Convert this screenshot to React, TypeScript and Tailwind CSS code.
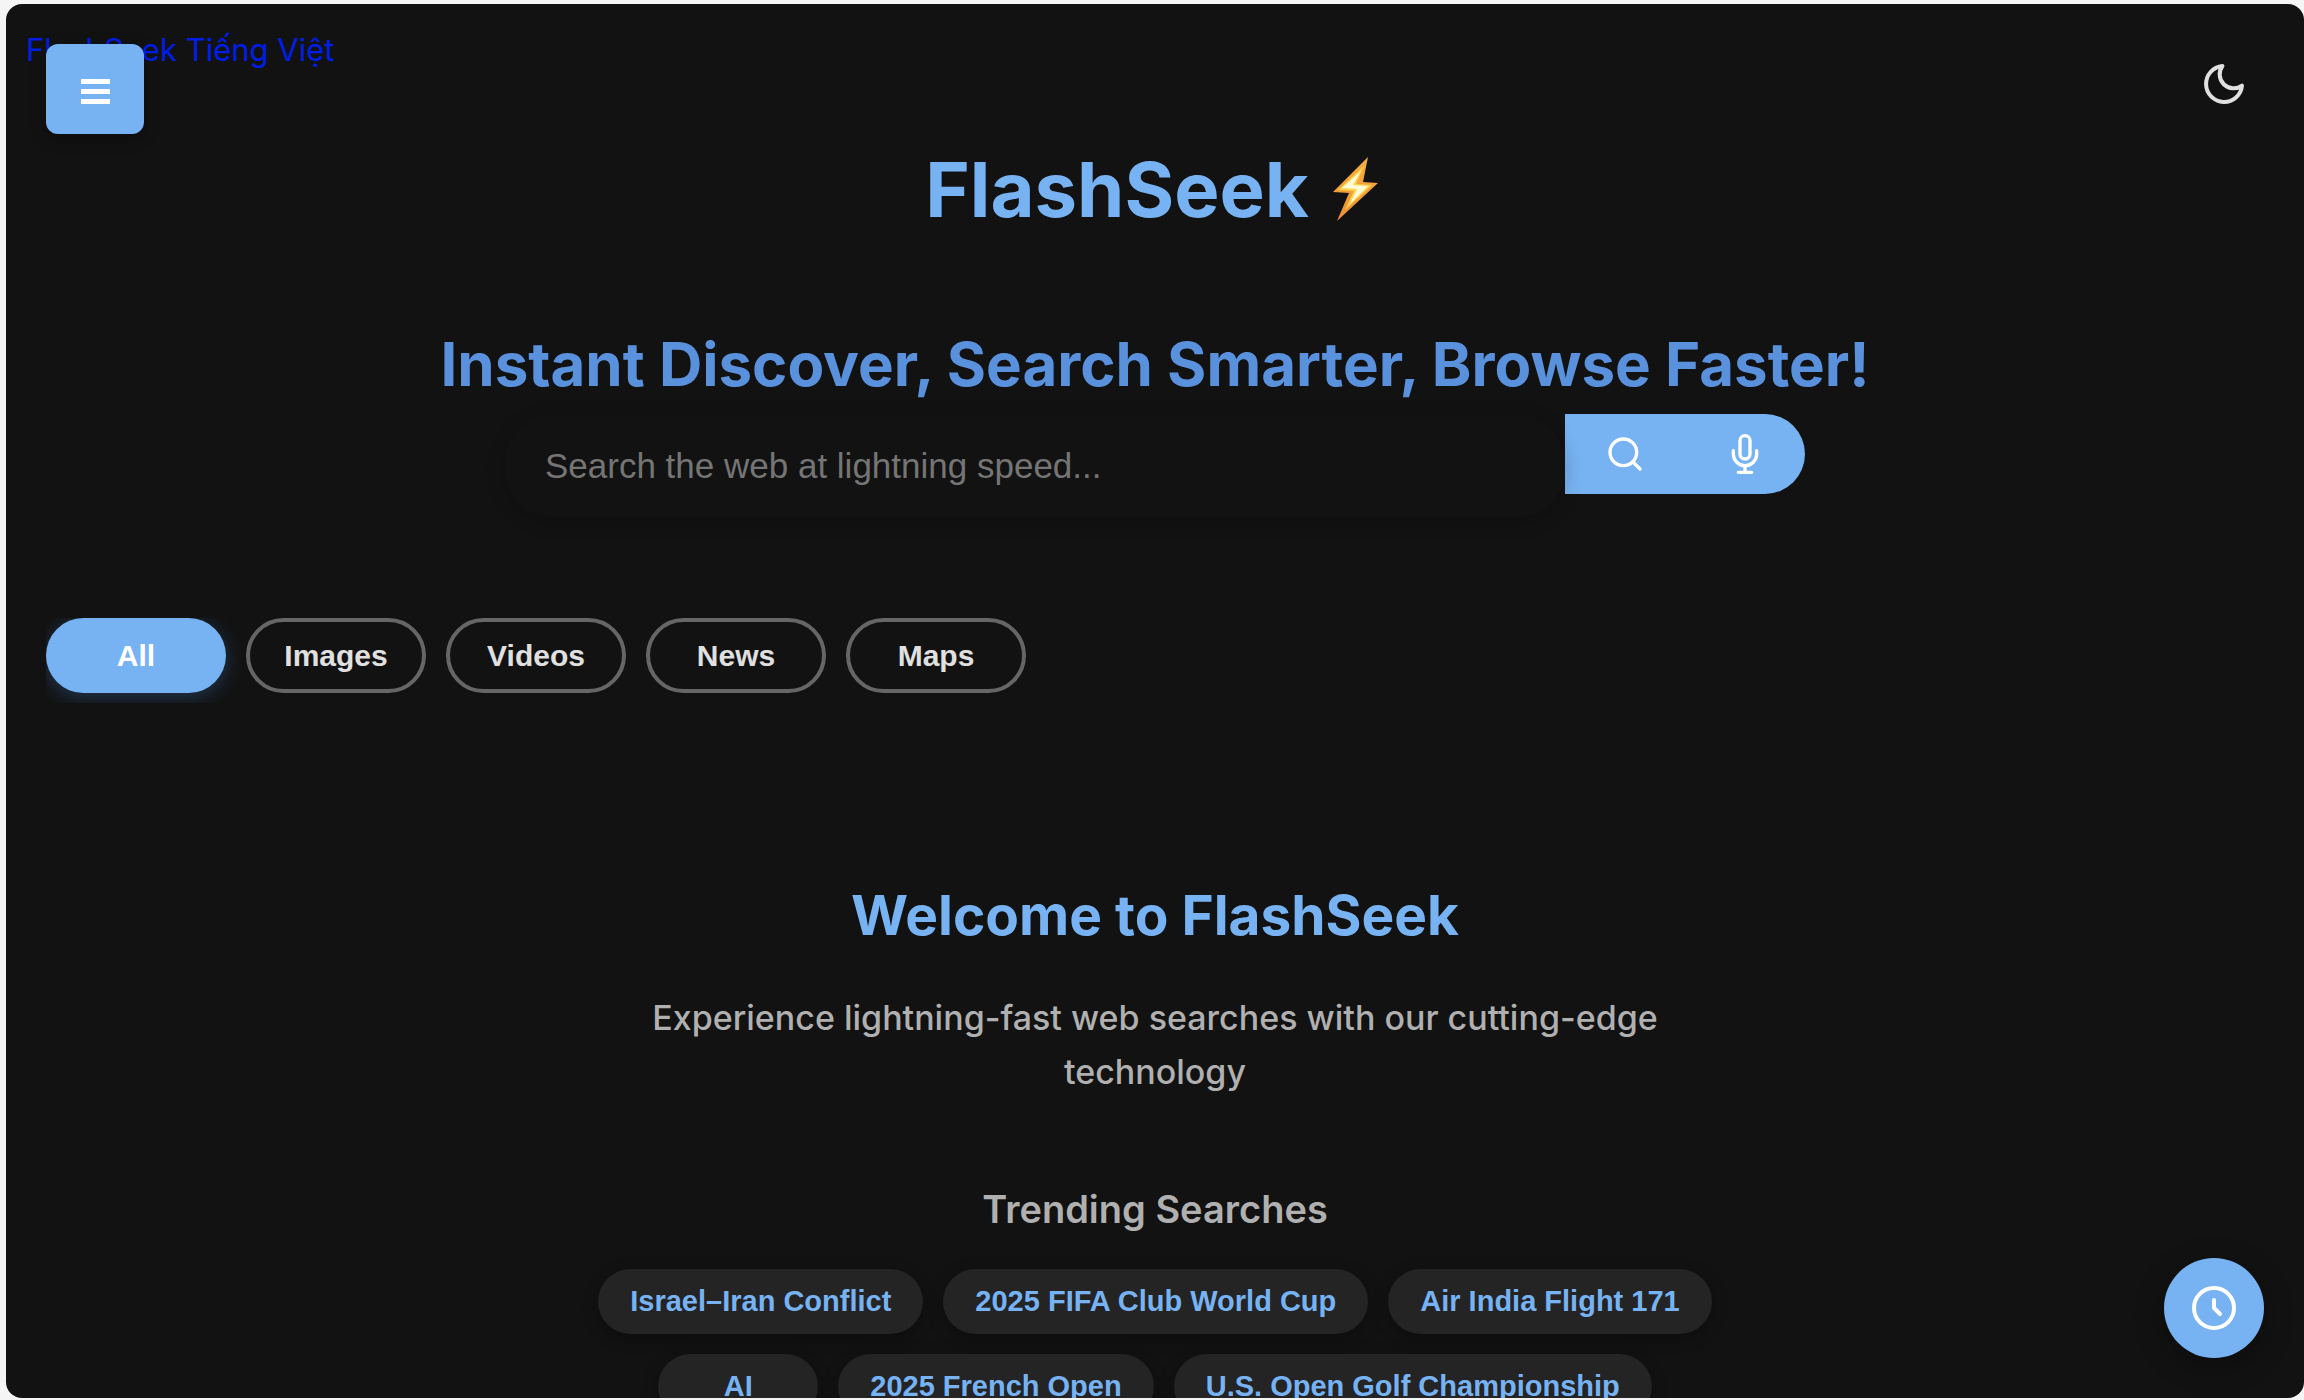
import { useState } from "react";

const TABS = ["All", "Images", "Videos", "News", "Maps"];

const TRENDING = [
  "Israel–Iran Conflict",
  "2025 FIFA Club World Cup",
  "Air India Flight 171",
  "AI",
  "2025 French Open",
  "U.S. Open Golf Championship",
];

const stroke = {
  viewBox: "0 0 24 24",
  fill: "none",
  stroke: "currentColor",
  strokeWidth: 2,
  strokeLinecap: "round",
  strokeLinejoin: "round",
  "aria-hidden": true,
} as const;

const Bolt = () => (
  <svg viewBox="0 0 52 64" className="h-16 w-[52px]" aria-hidden="true">
    <defs>
      <linearGradient id="bolt" x1="0" y1="0" x2="0" y2="1">
        <stop offset="0" stopColor="#f6b040" />
        <stop offset="1" stopColor="#ee8f32" />
      </linearGradient>
    </defs>
    <path d="M35 0 0 35l16 1L4 64l41-38-15-1z" fill="url(#bolt)" />
    <path d="M31 9 5 33l16 1-9 19 27-25-16-1z" fill="#fbd34e" />
    <path d="M28 14 9 31l15 1-7 15 18-18-15-1z" fill="#fffbd6" />
  </svg>
);

const Header = () => (
  <header className="relative px-10 pt-5">
    <a href="/vi" className="absolute top-5 left-5 text-[31px] leading-[52px] text-[#001ee6]">
      FlashSeek Tiếng Việt
    </a>
    <div className="relative flex items-start justify-between pt-5">
      <button
        type="button"
        aria-label="Menu"
        className="flex h-[90px] w-[98px] items-center justify-center rounded-xl bg-[#77b3f2] pt-1 text-white shadow-[0_4px_16px_rgba(0,0,0,0.3)]"
      >
        <svg viewBox="0 0 29 25" className="h-[25px] w-[29px]" fill="currentColor" aria-hidden="true">
          <path d="M0 0h29v5H0zM0 10h29v5H0zM0 20h29v5H0z" />
        </svg>
      </button>
      <button type="button" aria-label="Dark mode" className="p-4 text-[#e0e0e0]">
        <svg {...stroke} className="size-12">
          <path d="M21 12.79A9 9 0 1 1 11.21 3 7 7 0 0 0 21 12.79z" />
        </svg>
      </button>
    </div>
  </header>
);

const SearchBar = () => {
  const [query, setQuery] = useState("");
  return (
    <form className="mx-auto flex w-full max-w-[1300px] items-start" onSubmit={(e) => e.preventDefault()}>
      <input
        type="text"
        aria-label="Search the web"
        value={query}
        onChange={(e) => setQuery(e.target.value)}
        placeholder="Search the web at lightning speed..."
        className="relative h-[104px] min-w-0 flex-1 rounded-[50px] bg-transparent px-10 font-['Liberation_Sans',sans-serif] text-[35px] text-[#e0e0e0] shadow-[0_4px_20px_rgba(0,0,0,0.2)] outline-none placeholder:text-[#757575]"
      />
      <button type="submit" aria-label="Search" className="flex h-20 w-[120px] items-center justify-center bg-[#77b3f2] text-white">
        <svg {...stroke} className="size-10">
          <circle cx="11" cy="11" r="8" />
          <path d="m21 21-4.35-4.35" />
        </svg>
      </button>
      <button
        type="button"
        aria-label="Voice search"
        className="flex h-20 w-[120px] items-center justify-center rounded-r-[40px] bg-[#77b3f2] text-white"
      >
        <svg {...stroke} className="size-10 overflow-visible">
          <path d="M12 1a3 3 0 0 0-3 3v8a3 3 0 0 0 6 0V4a3 3 0 0 0-3-3z" />
          <path d="M19 10v2a7 7 0 0 1-14 0v-2M12 19v4M8 23h8" />
        </svg>
      </button>
    </form>
  );
};

const Tabs = () => {
  const [active, setActive] = useState("All");
  return (
    <nav className="mx-10 mt-[100px] flex gap-5 overflow-hidden pb-[10px] font-['Liberation_Sans',sans-serif]">
      {TABS.map((tab) => (
        <button
          key={tab}
          type="button"
          onClick={() => setActive(tab)}
          className={
            tab === active
              ? "h-[75px] w-[180px] rounded-full bg-[#77b3f2] text-[30px] font-bold text-white shadow-[0_4px_20px_rgba(74,144,226,0.3)]"
              : "h-[75px] w-[180px] rounded-full border-4 border-[#666666] text-[30px] font-bold text-[#e0e0e0]"
          }
        >
          {tab}
        </button>
      ))}
    </nav>
  );
};

const Welcome = () => (
  <section className="mx-auto mt-[172px] max-w-[1120px] text-center text-[#b0b0b0]">
    <h2 className="text-[55px] leading-[80px] font-bold text-[#77b3f2]">Welcome to FlashSeek</h2>
    <p className="mx-auto mt-9 max-w-[1080px] text-[34px] leading-[54px] font-medium">
      Experience lightning-fast web searches with our cutting-edge technology
    </p>
    <h3 className="mt-[85px] text-[38px] leading-[50px] font-semibold">Trending Searches</h3>
    <div className="mt-[35px] flex flex-wrap justify-center gap-5">
      {TRENDING.map((item) => (
        <button
          key={item}
          type="button"
          className="h-[65px] min-w-40 rounded-full bg-[#242424] px-8 font-['Liberation_Sans',sans-serif] text-[29px] font-bold text-[#77b3f2] shadow-[0_4px_16px_rgba(0,0,0,0.3)]"
        >
          {item}
        </button>
      ))}
    </div>
  </section>
);

const App = () => (
  <div className="h-screen bg-[#f5f5f5] pt-1 pb-[2px] pl-[6px] font-['Inter',sans-serif]">
    <div className="relative h-full overflow-hidden rounded-2xl bg-[#121212]">
      <Header />
      <main>
        <h1 className="flex items-center justify-center gap-6 text-[76px] leading-[110px] font-bold text-[#77b3f2]">
          FlashSeek <Bolt />
        </h1>
        <p className="mt-[76px] mb-[6px] text-center text-[60px] leading-[88px] font-bold text-[#5a91dd]">
          Instant Discover, Search Smarter, Browse Faster!
        </p>
        <SearchBar />
        <Tabs />
        <Welcome />
      </main>
      <button
        type="button"
        aria-label="History"
        className="absolute right-10 bottom-10 flex size-[100px] items-center justify-center rounded-full bg-[#77b3f2] text-white shadow-[0_8px_30px_rgba(0,0,0,0.3)]"
      >
        <svg {...stroke} className="size-12">
          <circle cx="12" cy="12" r="10" />
          <path d="M12 8v4l3 3" />
        </svg>
      </button>
    </div>
  </div>
);

export default App;
